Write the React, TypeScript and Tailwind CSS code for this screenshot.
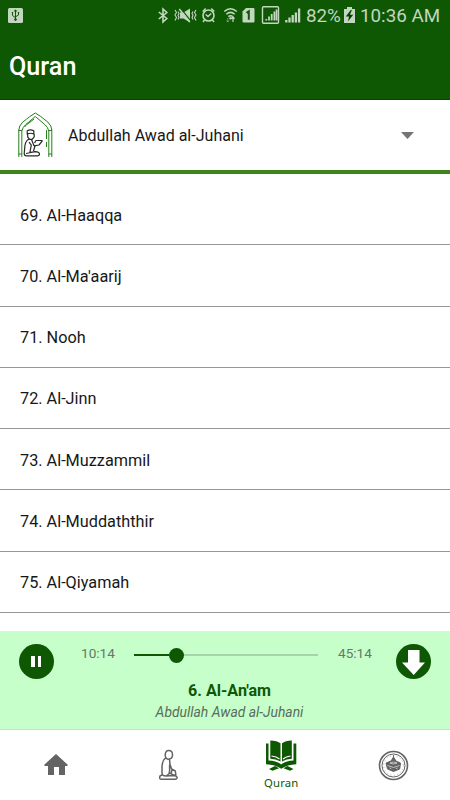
import React from "react";

const surahs = [
  "69. Al-Haaqqa",
  "70. Al-Ma'aarij",
  "71. Nooh",
  "72. Al-Jinn",
  "73. Al-Muzzammil",
  "74. Al-Muddaththir",
  "75. Al-Qiyamah",
];

function StatusBar() {
  return (
    <div className="flex h-8 items-center text-[#c2d6c0]">
      <svg className="ml-2 h-8 w-[15px] shrink-0" viewBox="8 0 15 32" fill="none">
        <rect x="8" y="8" width="15" height="15" rx="1.5" fill="currentColor" />
        <g stroke="#0e5804" strokeWidth="1">
          <path d="M15.5 10v10M12.5 13v2.5l3 2.2M18.5 12.5V15l-3 1.8" />
          <circle cx="15.5" cy="19.5" r="0.9" fill="#0e5804" />
          <path d="M14.5 11.2l1-1.4 1 1.4zM11.8 12.5h1.4M17.8 12.5h1.4" />
        </g>
      </svg>
      <svg className="ml-[134px] h-8 w-[145px] shrink-0" viewBox="157 0 145 32" fill="none" stroke="currentColor">
        <path d="M158.8 12l8 6.5-3.8 3.5V9l3.8 3.5-8 6.5" strokeWidth="1.6" />
        <path d="M175 10l1.5 2.5-1.5 2.5 1.5 2.5-1.5 3M178 11.5l1 2-1 2 1 2-1 2M196 10l-1.5 2.5 1.5 2.5-1.5 2.5 1.5 3M193 11.5l-1 2 1 2-1 2 1 2" strokeWidth="1.1" />
        <path d="M180 12.5h3.5l6.5-4v14l-6.5-4H180z" fill="currentColor" stroke="none" />
        <path d="M180.8 8.6l10.5 13" stroke="#0e5804" strokeWidth="1.4" />
        <path d="M179.3 9l10.5 13" strokeWidth="1.5" />
        <circle cx="208.5" cy="15.5" r="5.5" strokeWidth="1.6" />
        <path d="M202.7 11.5l3-3M214.3 11.5l-3-3M204.5 20l-1.5 2M212.5 20l1.5 2M205.7 14.5l2.3 2 3.2-3" strokeWidth="1.5" />
        <path d="M224.2 11.5q6.3-5.5 12.6 0M226.3 14.2q4.2-3.6 8.4 0M228.3 16.7q2.2-1.8 4.4 0" strokeWidth="1.5" />
        <circle cx="230.5" cy="18.3" r="1.2" fill="currentColor" stroke="none" />
        <path d="M233 22v-5M231.5 18.8l1.5-2 1.5 2" strokeWidth="1.2" />
        <path d="M227.8 18v4M226.5 20.5l1.3 1.6 1.3-1.6" strokeWidth="1" opacity="0.5" />
        <path d="M246 8h7.5q1 0 1 1v12.5q0 1-1 1h-10q-1 0-1-1v-10z" fill="currentColor" stroke="none" />
        <path d="M246.5 12.8l2.3-1.5v8.5" stroke="#0e5804" strokeWidth="2" />
        <rect x="262.5" y="6.8" width="16" height="16.5" rx="1" strokeWidth="1.4" />
        <path d="M266.3 20.5V19M269 20.5v-4M271.7 20.5V14M274.4 20.5v-9M276.6 20.5V9.5" strokeWidth="1.8" />
        <path d="M286.3 22.5V20M289.5 22.5v-5M292.7 22.5V15M295.9 22.5v-10M299.1 22.5V8.5" strokeWidth="2.3" />
      </svg>
      <span className="ml-[4px] w-[35px] shrink-0 text-[18.8px] leading-8 whitespace-nowrap">82%</span>
      <svg className="ml-[3px] h-8 w-[11px] shrink-0" viewBox="344 0 11 32">
        <path d="M347 7h5v2h3v14h-11V9h3z" fill="currentColor" />
        <path d="M350.8 10l-5 6.5h3.2l-1 5 5.2-6.7h-3.3l2-4.8z" fill="#063d02" />
      </svg>
      <span className="ml-[5px] text-[18.8px] leading-8 whitespace-nowrap">10:36 AM</span>
    </div>
  );
}

function ReciterIcon() {
  return (
    <svg className="ml-[17px] h-[46px] w-9" viewBox="17 112 36 46" fill="none">
      <g stroke="#247f19">
        <path d="M18.8 157v-27q0-4 4-8 4-3 7-5.5l5.5-3.5 5.5 3.5q3 2.5 7 5.5 4 4 4 8v27M21.8 157v-26q1-4 4-6.5l9.5-8 9.5 8q3 2.5 4 6.5v26" strokeWidth="1" />
        <path d="M18.5 130.5h3.5M18.5 154h3.5M48.5 130.5H52M48.5 154H52M24.5 127q2-3 4.5-4l5-4M46.5 130v9M46.5 142v5" />
      </g>
      <g stroke="#292929" strokeWidth="1.2" strokeLinejoin="round">
        <path d="M27.2 134v-3.3q3.2-1.5 6.6 0v3.3q-3.2-1.5-6.6 0zM27.7 134v3l2 2.3h2.5l2-2.5V134M29.5 139q-3.5 1-4.5 6l-.8 8.5q0 2.3 2.5 2.3H38q2.5-1 1-3-1.5-1.2-4-1.2l-5.2 1 1.5-7.5-2.3-3M31.5 139.5l2.5 6.3 5-.8 3.5-4.3M34.5 143l1.5-2.5h6.5M26 153.5l5-1M35 146l-1.5 5" />
      </g>
    </svg>
  );
}

function Player() {
  return (
    <section className="h-[99px] shrink-0 border-b border-[#b8e9bb] bg-[#c7ffcb]">
      <div className="flex pt-3 pl-[19px]">
        <button className="mt-[0.5px] flex size-[35px] items-center justify-center gap-[3px] rounded-full bg-[#0e5804] pr-[1px]" aria-label="Pause">
          <span className="h-[11px] w-[3.5px] bg-white" />
          <span className="h-[11px] w-[3.5px] bg-white" />
        </button>
        <span className="ml-[27px] w-[53px] text-[13.6px] leading-5 text-[#657967]">10:14</span>
        <div className="flex h-6 w-[184px] items-center">
          <div className="h-[2px] w-[35px] bg-[#0e5804]" />
          <div className="size-[15px] rounded-full bg-[#0e5804]" />
          <div className="h-[2px] flex-1 bg-[#a6d4a9]" />
        </div>
        <span className="ml-[20px] w-[58px] text-[13.6px] leading-5 text-[#657967]">45:14</span>
        <button className="mt-[0.5px] size-[35px] rounded-full bg-[#0e5804]" aria-label="Download">
          <svg className="size-[35px]" viewBox="0 0 35 35">
            <path d="M12 6h11.5v12.5H29L17.7 31 6 18.5h6z" fill="white" />
          </svg>
        </button>
      </div>
      <div className="mt-[2.5px] pl-[9px] text-center text-[16.1px] leading-[20px] font-bold text-[#0e5804]">6. Al-An'am</div>
      <div className="mt-[1px] pl-[9px] text-center text-[13.9px] leading-[20px] text-[#596d5b] italic">Abdullah Awad al-Juhani</div>
    </section>
  );
}

function BottomNav() {
  return (
    <nav className="grid h-[70px] shrink-0 grid-cols-4 bg-white text-[#636363]">
      <div className="flex justify-center pt-[23px]">
        <svg className="h-6 w-[26px]" viewBox="43 753 26 24" fill="currentColor">
          <path d="M56 754l12 11-1 1h-2v9h-6v-8h-5v8h-6v-9h-3l-1-1z" />
        </svg>
      </div>
      <div className="flex justify-center pt-[19px]">
        <svg className="h-[31px] w-[22px]" viewBox="158 749 22 31" fill="none" stroke="currentColor" strokeWidth="1.5" strokeLinejoin="round" strokeLinecap="round">
          <path d="M165.2 755.5q0-5 3.6-5t3.7 4-3.3 4.6-4-3.6zM165.6 758q-3 2-3.6 8.5v6.5q0 3 4 3l2.8-2q1-2 .8-5v-4M169.5 759l.5 5.5 1.6 4.5 3.7 2 .6 4h-2.5l-4-2.2M172 770l-1 3.5M162 775l-2 1q-1 3.2 1 3.2h14q2.5-.5 2-2.2-.5-1.2-3-1.5l-8 .5" />
        </svg>
      </div>
      <div className="flex flex-col items-center pt-[9px] text-[#0e5804]">
        <svg className="h-[34px] w-[34px]" viewBox="264 739 34 34">
          <g fill="currentColor">
            <path d="M270.3 740.5q7 .3 10.2 2.8v18.2q-4.5-2.5-10.2-2.7zM282 743.3q3.2-2.5 9.8-2.8v18.3q-5.3.2-9.8 2.7z" />
            <path d="M266 743.5h2.5v17q8 0 12.7 4 4.8-4 12.3-4v-17h2.8v20.7q-9 .3-15 4.5-6-4.2-15.3-4.5zM269 769l6-3 4 2.2-6.5 2.6zM293.5 769l-6-3-4 2.2 6.5 2.6z" />
          </g>
          <path d="M271.5 756q5 .5 8 3M283 759q3-2.5 7.5-3" fill="none" stroke="white" strokeWidth="1.1" />
        </svg>
        <span className="mt-[1px] font-['Noto_Sans',sans-serif] text-[11.3px] leading-[18px] tracking-[0.2px]">Quran</span>
      </div>
      <div className="flex justify-center pt-[20px]">
        <svg className="size-[31px]" viewBox="378 749 31 31" fill="none" stroke="currentColor">
          <circle cx="393.5" cy="764.5" r="14" strokeWidth="1.6" />
          <circle cx="393.5" cy="764.5" r="11.5" strokeWidth="1" />
          <circle cx="393.5" cy="764.5" r="9.8" strokeWidth=".5" strokeDasharray="1 2.5" />
          <path d="M386 762l7.5-3 7 3-.8 6-6.2 2.5-6-2.5z" fill="currentColor" />
          <path d="M393.5 754v5M391.3 759.5l2.2-3.5 2.2 3.5z" fill="currentColor" />
          <path d="M387.5 764.5l6 2 6-2M390 762l3.5-1 3.5 1-3.5 1zM389.5 767l1.8.7M395.8 767.7l1.8-.7" stroke="white" strokeWidth=".6" />
        </svg>
      </div>
    </nav>
  );
}

export default function App() {
  return (
    <main className="flex h-[800px] w-[450px] flex-col overflow-hidden bg-white font-[Roboto,sans-serif] text-[#171717]">
      <header className="h-[100px] shrink-0 border-b border-[#0a4402] bg-[#0e5804]">
        <StatusBar />
        <h1 className="flex h-[69px] items-center pl-[9px] text-[25.2px] font-medium text-white">Quran</h1>
      </header>
      <div className="flex h-[74px] shrink-0 items-center border-b-[4px] border-[#3d8519]">
        <ReciterIcon />
        <span className="ml-[15px] flex-1 pt-[2px] text-[16.05px]">Abdullah Awad al-Juhani</span>
        <svg className="mr-[36px] h-[7px] w-[13px]" viewBox="0 0 13 7"><path d="M0 0h13L6.5 7z" fill="#757575" /></svg>
      </div>
      <div className="min-h-0 flex-1 overflow-hidden pt-[10px]">
        {surahs.map((name) => (
          <div key={name} className="flex h-[61.25px] items-center border-b border-[#969696] pt-[3.5px] pl-5 text-[16.25px]">
            {name}
          </div>
        ))}
      </div>
      <Player />
      <BottomNav />
    </main>
  );
}
